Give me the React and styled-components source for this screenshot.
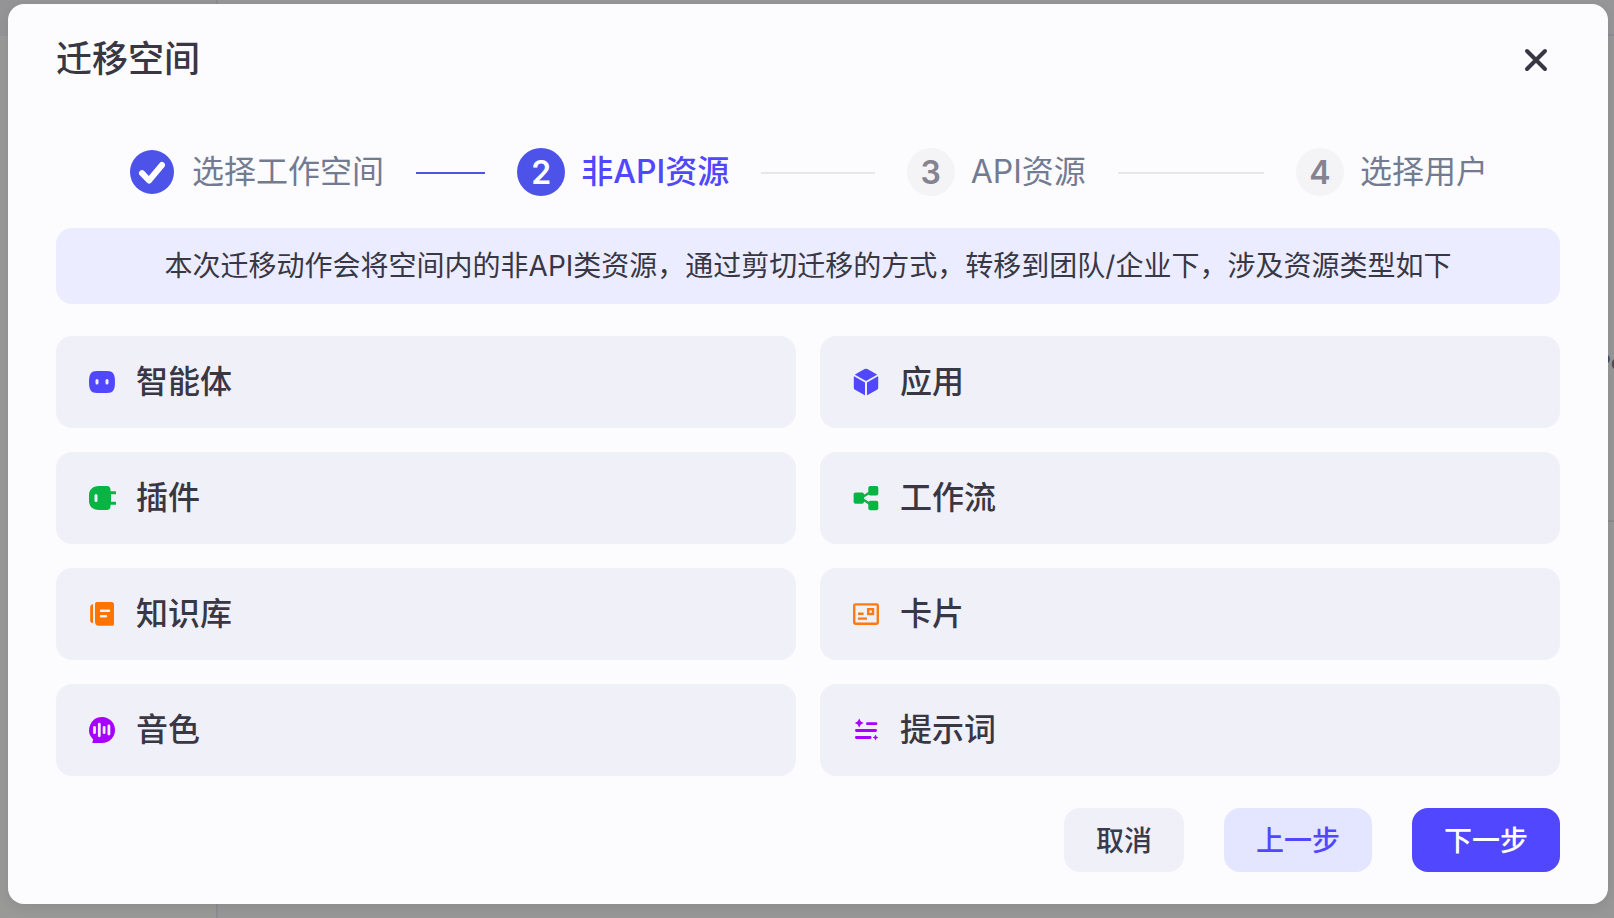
/* eslint-disable react/prop-types */
import React from 'react';
import styled, { createGlobalStyle } from 'styled-components';


const GlobalStyle = createGlobalStyle`
  * {
    box-sizing: border-box;
  }
  body {
    margin: 0;
    background-color: #979797;
    font-family: Inter, "Noto Sans CJK SC", sans-serif;
    color: #383743;
  }
  button {
    font-family: inherit;
    border: none;
    cursor: pointer;
  }
`;

const Page = styled.div`
  display: flex;
  min-height: 100vh;
`;

const Sidebar = styled.div`
  width: 218px;
  background-color: #999998;
  border-right: 2px solid #8d8d91;
`;

const SidebarTop = styled.div`
  height: 36px;
  background-color: #949496;
`;

const Main = styled.div`
  flex: 1;
  min-width: 0;
  overflow: hidden;
`;

const TopBar = styled.div`
  height: 36px;
  background-color: #969698;
  border-bottom: 2px solid #8e8e90;
`;

const Content = styled.div`
  height: 486px;
  display: flex;
  justify-content: flex-end;
  align-items: flex-start;
  padding-top: 312px;
  background-color: #979797;
  border-bottom: 2px solid #8b8b8d;
`;

const PageText = styled.span`
  margin-right: -10px;
  font-size: 22px;
  line-height: 28px;
  font-weight: 500;
  color: #4b4c55;
`;

const Overlay = styled.div`
  position: absolute;
  top: 0;
  left: 0;
  right: 0;
  padding: 4px 6px 14px 8px;
`;

const Modal = styled.div`
  display: flex;
  flex-direction: column;
  gap: 32px;
  padding: 32px 48px;
  background-color: #fcfcff;
  border-radius: 16px;
  box-shadow: 0 4px 12px rgba(0, 0, 0, 0.08);
`;

const Header = styled.div`
  display: flex;
  justify-content: space-between;
  align-items: center;
  height: 48px;
  margin-bottom: 32px;
`;

const Title = styled.h2`
  margin: 0;
  padding-bottom: 2px;
  font-size: 36px;
  line-height: 44px;
  font-weight: 500;
`;

const CloseButton = styled.button`
  display: flex;
  justify-content: center;
  align-items: center;
  width: 48px;
  height: 48px;
  padding: 0;
  color: inherit;
  background: none;
`;

const Steps = styled.ol`
  display: flex;
  margin: 0;
  padding: 0 72px;
  list-style: none;
`;

const StepItem = styled.li`
  display: flex;
  align-items: center;
  flex: ${({ $last }) => $last ? 'none' : '1'};
`;

const StepMark = styled.span`
  display: flex;
  justify-content: center;
  align-items: center;
  width: 48px;
  height: 48px;
  margin-right: 16px;
  border-radius: 50%;
  font-size: 32px;
  font-weight: 600;
  color: ${({ $status }) => $status === 'process' ? 'white' : '#85838f'};
  background-color: ${({ $status }) => ({ process: '#4d53e8', wait: '#f4f4f6' })[$status] || 'transparent'};
`;

const StepLabel = styled.span`
  font-size: 32px;
  line-height: 48px;
  white-space: nowrap;
  font-weight: ${({ $status }) => $status === 'process' ? 500 : 400};
  color: ${({ $status }) => $status === 'process' ? '#5147ff' : '#737b91'};
`;

const StepLine = styled.span`
  flex: 1;
  height: 2px;
  margin: 2px 32px 0;
  background-color: ${({ $done }) => $done ? '#4d53e8' : '#e6e6eb'};
`;

const Notice = styled.p`
  margin: 0;
  padding: 16px;
  border-radius: 16px;
  background-color: #ebecff;
  font-size: 28px;
  line-height: 44px;
  text-align: center;
`;

const ResourceGrid = styled.div`
  display: grid;
  grid-template-columns: 1fr 1fr;
  gap: 24px;
`;

const ResourceCard = styled.div`
  display: flex;
  align-items: center;
  gap: 20px;
  padding: 22px 32px;
  border-radius: 16px;
  background-color: #f0f0f9;
  font-size: 32px;
  line-height: 48px;
  font-weight: 500;
`;

const Icon = styled.svg`
  width: 28px;
  height: 28px;
  color: ${({ $color }) => $color};
`;

const Footer = styled.div`
  display: flex;
  justify-content: flex-end;
  gap: 40px;
`;

const Button = styled.button`
  height: 64px;
  padding: 0 32px 2px;
  border-radius: 16px;
  font-size: 28px;
  font-weight: 500;
  color: #383b4d;
  background-color: #f0f0f9;
`;

const SecondaryButton = styled(Button)`
  color: #5147ff;
  background-color: #e4e6ff;
`;

const PrimaryButton = styled(Button)`
  color: white;
  background-color: #5147ff;
`;

const CARD = '#f0f0f9';

const steps = [
  { title: '选择工作空间', status: 'finish' },
  { title: '非API资源', status: 'process' },
  { title: 'API资源', status: 'wait' },
  { title: '选择用户', status: 'wait' },
];

const resources = [
  {
    name: '智能体',
    color: '#5147ff',
    icon: (
      <>
        <path fill="currentColor" d="M1 14C1 6 3 3 9 3h10c6 0 8 3 8 11s-2 11-8 11H9c-6 0-8-3-8-11z"/>
        <rect x="7.5" y="11" width="3" height="5.4" rx="1.5" fill={CARD}/>
        <rect x="17.5" y="11" width="3" height="5.4" rx="1.5" fill={CARD}/>
      </>
    ),
  },
  {
    name: '应用',
    color: '#5147ff',
    icon: (
      <g fill="currentColor">
        <path d="M12.6 1.1q1.4-.7 2.8 0l9.2 5.2q.7.4 0 .8L14 13 3.4 7.1q-.7-.4 0-.8z"/>
        <path d="M1.8 8.8q0-.8.7-.4L13 14.5v12.3q0 .6-.6.3L3 21.8q-1.2-.7-1.2-2z"/>
        <path d="M26.2 8.8q0-.8-.7-.4L15 14.5v12.3q0 .6.6.3l9.4-5.3q1.2-.7 1.2-2z"/>
      </g>
    ),
  },
  {
    name: '插件',
    color: '#08b443',
    icon: (
      <>
        <path fill="currentColor" d="M11 2h8c2.2 0 3.5 1.6 3.5 3.5v1.7H27a1.5 1.5 0 0 1 0 3h-4v7.6h4a1.5 1.5 0 0 1 0 3h-4.5v1.7c0 1.9-1.3 3.5-3.5 3.5h-8C4.5 26 1 22 1 17v-6c0-5 3.5-9 10-9z"/>
        <rect x="6.5" y="10" width="3" height="8" rx="1.5" fill={CARD}/>
      </>
    ),
  },
  {
    name: '工作流',
    color: '#08b443',
    icon: (
      <>
        <path d="M9 14 20 7M9 14l11 7.5" stroke="currentColor" strokeWidth="2.2"/>
        <g fill="currentColor">
          <rect x="1.6" y="8.4" width="10.4" height="11.4" rx="2"/>
          <rect x="16.3" y="2" width="10" height="9.6" rx="2"/>
          <rect x="16.3" y="16.7" width="10" height="9.6" rx="2"/>
        </g>
      </>
    ),
  },
  {
    name: '知识库',
    color: '#ff7300',
    icon: (
      <>
        <path fill="currentColor" d="M5 4.3v19C3 22.8 2.2 22 2.2 20.5V7C2.2 5.5 3 4.6 5 4.3z"/>
        <path fill="currentColor" d="M9 2h14.5C25.2 2 26 3 26 4.5V24c0 1-.6 1.7-1.7 1.7H11c-2.8 0-4-1.5-4-4V4c0-1.3.8-2 2-2z"/>
        <path d="M13 10.7h8M13 16.3h5" stroke={CARD} strokeWidth="2.4" strokeLinecap="round"/>
      </>
    ),
  },
  {
    name: '卡片',
    color: '#ff7a10',
    icon: (
      <g fill="none" stroke="currentColor" strokeWidth="2.4">
        <rect x="2.2" y="4.4" width="23.6" height="19.4" rx="1.2"/>
        <rect x="16.2" y="9.2" width="4.8" height="4.8"/>
        <path d="M6 13.8h5.6M6 18.6h9"/>
      </g>
    ),
  },
  {
    name: '音色',
    color: '#a800ff',
    icon: (
      <>
        <path fill="currentColor" d="M14 1a13 13 0 0 1 0 26H5q-1-.3-.5-1.3l.7-2.3A13 13 0 0 1 14 1z"/>
        <path d="M6.5 11.3v5.4M11.3 8.2v11.6M16.1 11.3v5.4M20.9 10v8" stroke={CARD} strokeWidth="2.8" strokeLinecap="round"/>
      </>
    ),
  },
  {
    name: '提示词',
    color: '#a800ff',
    icon: (
      <>
        <path d="M15.4 7.7h8.6M4.4 14.5h19.2M4.4 21.5h13.8" stroke="currentColor" strokeWidth="2.8" strokeLinecap="round"/>
        <path fill="currentColor" d="m7.2 2.6 1.6 2.8L11.6 7 8.8 8.6l-1.6 2.8-1.6-2.8L2.8 7l2.8-1.6zM23.5 18.6l.9 1.9 2 1-2 1-.9 1.9-.9-1.9-2-1 2-1z"/>
      </>
    ),
  },
];

const Step = ({ step, number, last }) => (
  <StepItem $last={last}>
    <StepMark $status={step.status}>
      {step.status === 'finish' ? (
        <svg width="44" height="44" viewBox="0 0 44 44">
          <circle cx="22" cy="22" r="22" fill="#4d53e8"/>
          <path d="m12 23.2 7 7.3L32 15" fill="none" stroke="white" strokeWidth="6" strokeLinecap="round" strokeLinejoin="round"/>
        </svg>
      ) : number}
    </StepMark>
    <StepLabel $status={step.status}>{step.title}</StepLabel>
    {!last && <StepLine $done={step.status === 'finish'}/>}
  </StepItem>
);

const App = () => {
  return(
    <>
      <GlobalStyle/>
      <Page>
        <Sidebar>
          <SidebarTop/>
        </Sidebar>
        <Main>
          <TopBar/>
          <Content>
            <PageText>Po</PageText>
          </Content>
        </Main>
      </Page>
      <Overlay>
        <Modal role="dialog" aria-labelledby="modal-title">
          <Header>
            <Title id="modal-title">迁移空间</Title>
            <CloseButton type="button" aria-label="关闭">
              <svg width="24" height="24" viewBox="0 0 24 24">
                <path d="m3 3 18 18M21 3 3 21" stroke="currentColor" strokeWidth="4" strokeLinecap="round"/>
              </svg>
            </CloseButton>
          </Header>
          <Steps>
            {steps.map((step, i) => (
              <Step key={step.title} step={step} number={i + 1} last={i === steps.length - 1}/>
            ))}
          </Steps>
          <Notice>本次迁移动作会将空间内的非API类资源，通过剪切迁移的方式，转移到团队/企业下，涉及资源类型如下</Notice>
          <ResourceGrid>
            {resources.map(({ name, color, icon }) => (
              <ResourceCard key={name}>
                <Icon viewBox="0 0 28 28" $color={color} aria-hidden="true">{icon}</Icon>
                {name}
              </ResourceCard>
            ))}
          </ResourceGrid>
          <Footer>
            <Button type="button">取消</Button>
            <SecondaryButton type="button">上一步</SecondaryButton>
            <PrimaryButton type="button">下一步</PrimaryButton>
          </Footer>
        </Modal>
      </Overlay>
    </>
  );
};


export default App;
